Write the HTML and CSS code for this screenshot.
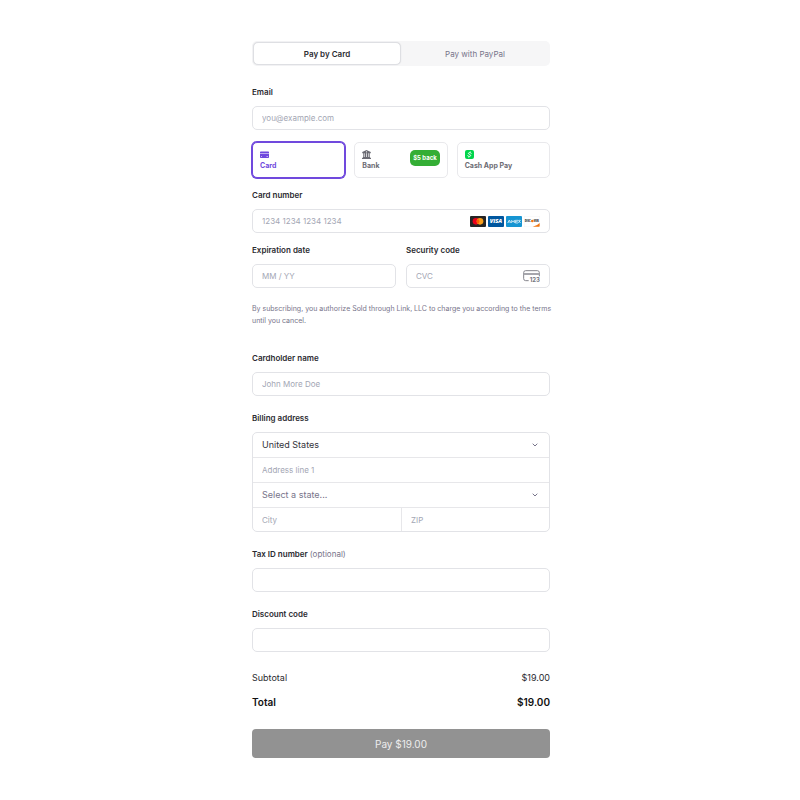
FILE: index.html
```html
<!DOCTYPE html>
<html lang="en">
<head>
<meta charset="utf-8">
<meta name="viewport" content="width=device-width, initial-scale=1">
<title>Checkout</title>
<link rel="stylesheet" href="styles.css">
</head>
<body>
<form class="checkout">
  <div class="tabs">
    <button type="button" class="tab tab-active">Pay by Card</button>
    <button type="button" class="tab">Pay with PayPal</button>
  </div>

  <div class="field">
    <label for="email">Email</label>
    <input class="control" id="email" type="email" placeholder="you@example.com">
  </div>

  <div class="methods">
    <button type="button" class="method method-active">
      <svg class="method-icon" viewBox="0 0 18 16" aria-hidden="true"><path fill="currentColor" d="M0 3.500Q0 2 1.500 2h15Q18 2 18 3.500V5H0z"/><path fill="currentColor" opacity=".45" d="M0 5h18v2H0z"/><path fill="currentColor" d="M0 7h18v6.500q0 1.500-1.500 1.500h-15Q0 15 0 13.500z"/><path fill="#fff" opacity=".8" d="M2 11h2v1.500H2zM13 11h3v1.500h-3z"/></svg>
      <span>Card</span>
    </button>
    <button type="button" class="method">
      <svg class="method-icon" viewBox="0 0 18 18" aria-hidden="true"><path fill="currentColor" fill-rule="evenodd" d="M9 0l8.500 4v2.500H.5V4zM9 2.500a1.200 1.200 0 1 0 0 2.400 1.200 1.200 0 0 0 0-2.400zM2.500 6.500h2.300V14H2.500zM6 6.500h2.300V14H6zM9.700 6.500H12V14H9.700zM13.200 6.500h2.300V14h-2.300zM1.500 14h15v2h-15zM0 16h18v2H0z"/></svg>
      <span>Bank</span>
      <span class="badge">$5 back</span>
    </button>
    <button type="button" class="method">
      <svg class="method-icon" viewBox="0 0 18 18" aria-hidden="true"><rect width="18" height="18" rx="4" fill="#00d54b"/><path d="M12.500 6.300C11 4.900 7 4.700 6.800 6.900c-.1 2.200 4.700 1.800 4.500 4.200-.3 2.300-4 2.200-5.800.6" fill="none" stroke="#fff" stroke-width="2" stroke-linecap="round"/><path d="M10.500 3l-.4 2M7.900 13l-.4 2" fill="none" stroke="#fff" stroke-width="2"/></svg>
      <span>Cash App Pay</span>
    </button>
  </div>

  <div class="card-fields">
    <div class="field field-wide">
      <label for="number">Card number</label>
      <div class="control with-icon">
        <input id="number" type="text" inputmode="numeric" placeholder="1234 1234 1234 1234">
        <span class="brands">
          <svg viewBox="0 0 48 33" role="img" aria-label="Mastercard"><rect width="48" height="33" rx="3" fill="#252525"/><circle cx="18" cy="16" r="10" fill="#eb001b"/><circle cx="30" cy="16" r="10" fill="#f79e1b"/><path d="M24 8a10 10 0 0 1 0 16 10 10 0 0 1 0-16" fill="#ff5f00"/></svg>
          <svg viewBox="0 0 48 33" role="img" aria-label="Visa"><rect width="48" height="33" rx="3" fill="#00579f"/><text class="mark visa" x="24" y="22" text-anchor="middle">VISA</text></svg>
          <svg viewBox="0 0 48 33" role="img" aria-label="American Express"><rect width="48" height="33" rx="3" fill="#1695d2"/><g fill="none" stroke="#fff" stroke-width="2"><path d="M5 21l5-9 5 9M7 18h6M17 21v-8l4 5 4-5v8M36 13h-8v8h8M28 17h7M38 13h5l-6 8M37 13l7 8"/></g></svg>
          <svg viewBox="0 0 48 33" role="img" aria-label="Discover"><rect x=".5" y=".5" width="47" height="32" rx="3" fill="#fff" stroke="#e6e6e6"/><path d="M47 21v9q0 2-2 2H26q14-3 21-11z" fill="#f27712"/><text class="mark discover" x="2" y="18">DISC</text><circle cx="25" cy="15" r="4" fill="#f27712"/><text class="mark discover" x="29" y="18">VER</text></svg>
        </span>
      </div>
    </div>
    <div class="field">
      <label for="expiry">Expiration date</label>
      <input class="control" id="expiry" type="text" placeholder="MM / YY">
    </div>
    <div class="field">
      <label for="cvc">Security code</label>
      <div class="control with-icon">
        <input id="cvc" type="text" placeholder="CVC">
        <svg class="cvc-icon" viewBox="0 0 51 36" aria-hidden="true"><path d="M17 32H8q-6 0-6-6V8q0-6 6-6h35q6 0 6 6v11" fill="none" stroke="#85858d" stroke-width="3"/><path d="M2 9h47v6H2z" fill="#a6a6ac"/><text class="digits" x="20" y="35">123</text></svg>
      </div>
    </div>
  </div>

  <p class="terms">By subscribing, you authorize Sold through Link, LLC to charge you according to the terms until you cancel.</p>

  <div class="details">
    <div class="field">
      <label for="name">Cardholder name</label>
      <input class="control" id="name" type="text" placeholder="John More Doe">
    </div>
    <fieldset class="field">
      <legend>Billing address</legend>
      <div class="address">
        <div class="select-row">
          <select class="country" aria-label="Country"><option>United States</option></select>
          <svg class="chevron" viewBox="0 0 6 4" aria-hidden="true"><path d="M.7.700L3 3 5.300.700"/></svg>
        </div>
        <input type="text" aria-label="Address line 1" placeholder="Address line 1">
        <div class="select-row">
          <select aria-label="State"><option>Select a state...</option></select>
          <svg class="chevron" viewBox="0 0 6 4" aria-hidden="true"><path d="M.7.700L3 3 5.300.700"/></svg>
        </div>
        <div class="city-row">
          <input type="text" aria-label="City" placeholder="City">
          <input type="text" aria-label="ZIP" placeholder="ZIP">
        </div>
      </div>
    </fieldset>
    <div class="field">
      <label for="tax">Tax ID number <span class="optional">(optional)</span></label>
      <input class="control" id="tax" type="text">
    </div>
    <div class="field">
      <label for="discount">Discount code</label>
      <input class="control" id="discount" type="text">
    </div>
  </div>

  <dl class="summary">
    <div class="sum-row"><dt>Subtotal</dt><dd>$19.00</dd></div>
    <div class="sum-row total"><dt>Total</dt><dd>$19.00</dd></div>
  </dl>
  <button type="submit" class="pay">Pay $19.00</button>
</form>
</body>
</html>
```
FILE: styles.css
```css
* { box-sizing: border-box; }

body {
  margin: 0;
  padding: 41px 15px 41px 17px;
  background: #fff;
  color: #2b2b31;
  font: 8px/12px Inter, "Liberation Sans", sans-serif;
}

button, input, select { font: inherit; color: inherit; margin: 0; }
input, select { border: 0; background: transparent; min-width: 0; outline: 0; }
input::placeholder { color: #a3a6b4; opacity: 1; }

.checkout { max-width: 298px; margin: 0 auto; }

.tabs {
  display: grid;
  grid-template-columns: 1fr 1fr;
  padding: 1px;
  margin-bottom: 20px;
  border-radius: 5px;
  background: #f6f6f7;
}
.tab {
  height: 23px;
  padding: 0;
  border: 1px solid transparent;
  border-radius: 5px;
  background: none;
  color: #77748a;
}
.tab-active {
  background: #fff;
  border-color: #dedfe3;
  color: #2b2b31;
  font-weight: 600;
  box-shadow: 0 0 1px #d5d6da;
}

.field {
  display: flex;
  flex-direction: column;
  gap: 8px;
  min-width: 0;
  margin: 0;
  padding: 0;
  border: 0;
}
label, legend { display: block; padding: 0; font-weight: 600; }
legend { margin-bottom: 8px; }
.optional { color: #77748a; font-weight: 400; }

.control {
  width: 100%;
  height: 24px;
  padding: 0 9px;
  border: 1px solid #e2e3e7;
  border-radius: 5px;
  background: #fff;
}
.with-icon { display: flex; align-items: center; gap: 8px; }
.with-icon input { flex: 1; padding: 0; }
.brands { display: flex; gap: 2px; }
.brands svg { width: 16px; height: 11px; }
.mark { font-family: "Open Sans", sans-serif; font-weight: 800; }
.visa { font-size: 17px; font-style: italic; fill: #fff; }
.discover { font-size: 8px; fill: #333; }
.digits { font-size: 18px; font-weight: 700; fill: #77777f; }
.cvc-icon { width: 17px; height: 12px; }

.methods {
  display: grid;
  grid-template-columns: repeat(3, 1fr);
  gap: 9px;
  margin: 12px 0 11px;
}
.method {
  position: relative;
  display: flex;
  flex-direction: column;
  align-items: flex-start;
  justify-content: center;
  gap: 2px;
  height: 36px;
  padding: 0 7px;
  border: 1px solid #e9e9ec;
  border-radius: 5px;
  background: #fff;
  color: #6b6b73;
  font-size: 7px;
  line-height: 10px;
  font-weight: 700;
  text-align: left;
}
.method-active {
  border-color: #7049dd;
  color: #7049dd;
  box-shadow: 0 0 0 1px #7049dd;
}
.method-icon { width: 9px; height: 9px; }
.badge {
  position: absolute;
  top: 7px;
  right: 7px;
  padding: 3px;
  border-radius: 5px;
  background: #34ae35;
  color: #fff;
  font-size: 6px;
}

.card-fields { display: grid; grid-template-columns: 1fr 1fr; gap: 11px 10px; }
.field-wide { grid-column: 1 / -1; }

.terms {
  margin: 15px -4px 25px 0;
  color: #77748a;
  font-size: 7px;
}

.details { display: grid; gap: 16px; }
.address {
  display: grid;
  border: 1px solid #e2e3e7;
  border-radius: 5px;
}
.address > * + * { border-top: 1px solid #e7e7ea; }
.address input { height: 25px; padding: 0 9px; }
.address > .city-row input { height: 23px; }
.city-row { display: grid; grid-template-columns: 1fr 1fr; }
.city-row input + input { border-left: 1px solid #e7e7ea; }
.select-row { display: grid; align-items: center; font-size: 9px; }
.select-row select {
  grid-area: 1 / 1;
  width: 100%;
  height: 24px;
  padding: 0 9px;
  appearance: none;
  color: #77748a;
}
.select-row .country { color: #33333a; }
.chevron {
  grid-area: 1 / 1;
  justify-self: end;
  width: 6px;
  height: 4px;
  margin-right: 11px;
  fill: none;
  stroke: #77748a;
  pointer-events: none;
}

.summary { display: grid; gap: 12px; margin: 20px 0 21px; font-size: 9px; }
.sum-row { display: flex; justify-content: space-between; }
.sum-row dd { margin: 0; }
.total { font-size: 10px; font-weight: 600; color: #111; }

.pay {
  width: 100%;
  height: 29px;
  padding: 0;
  border: 0;
  border-radius: 4px;
  background: #929292;
  color: #ededed;
  font-size: 10px;
}
```
